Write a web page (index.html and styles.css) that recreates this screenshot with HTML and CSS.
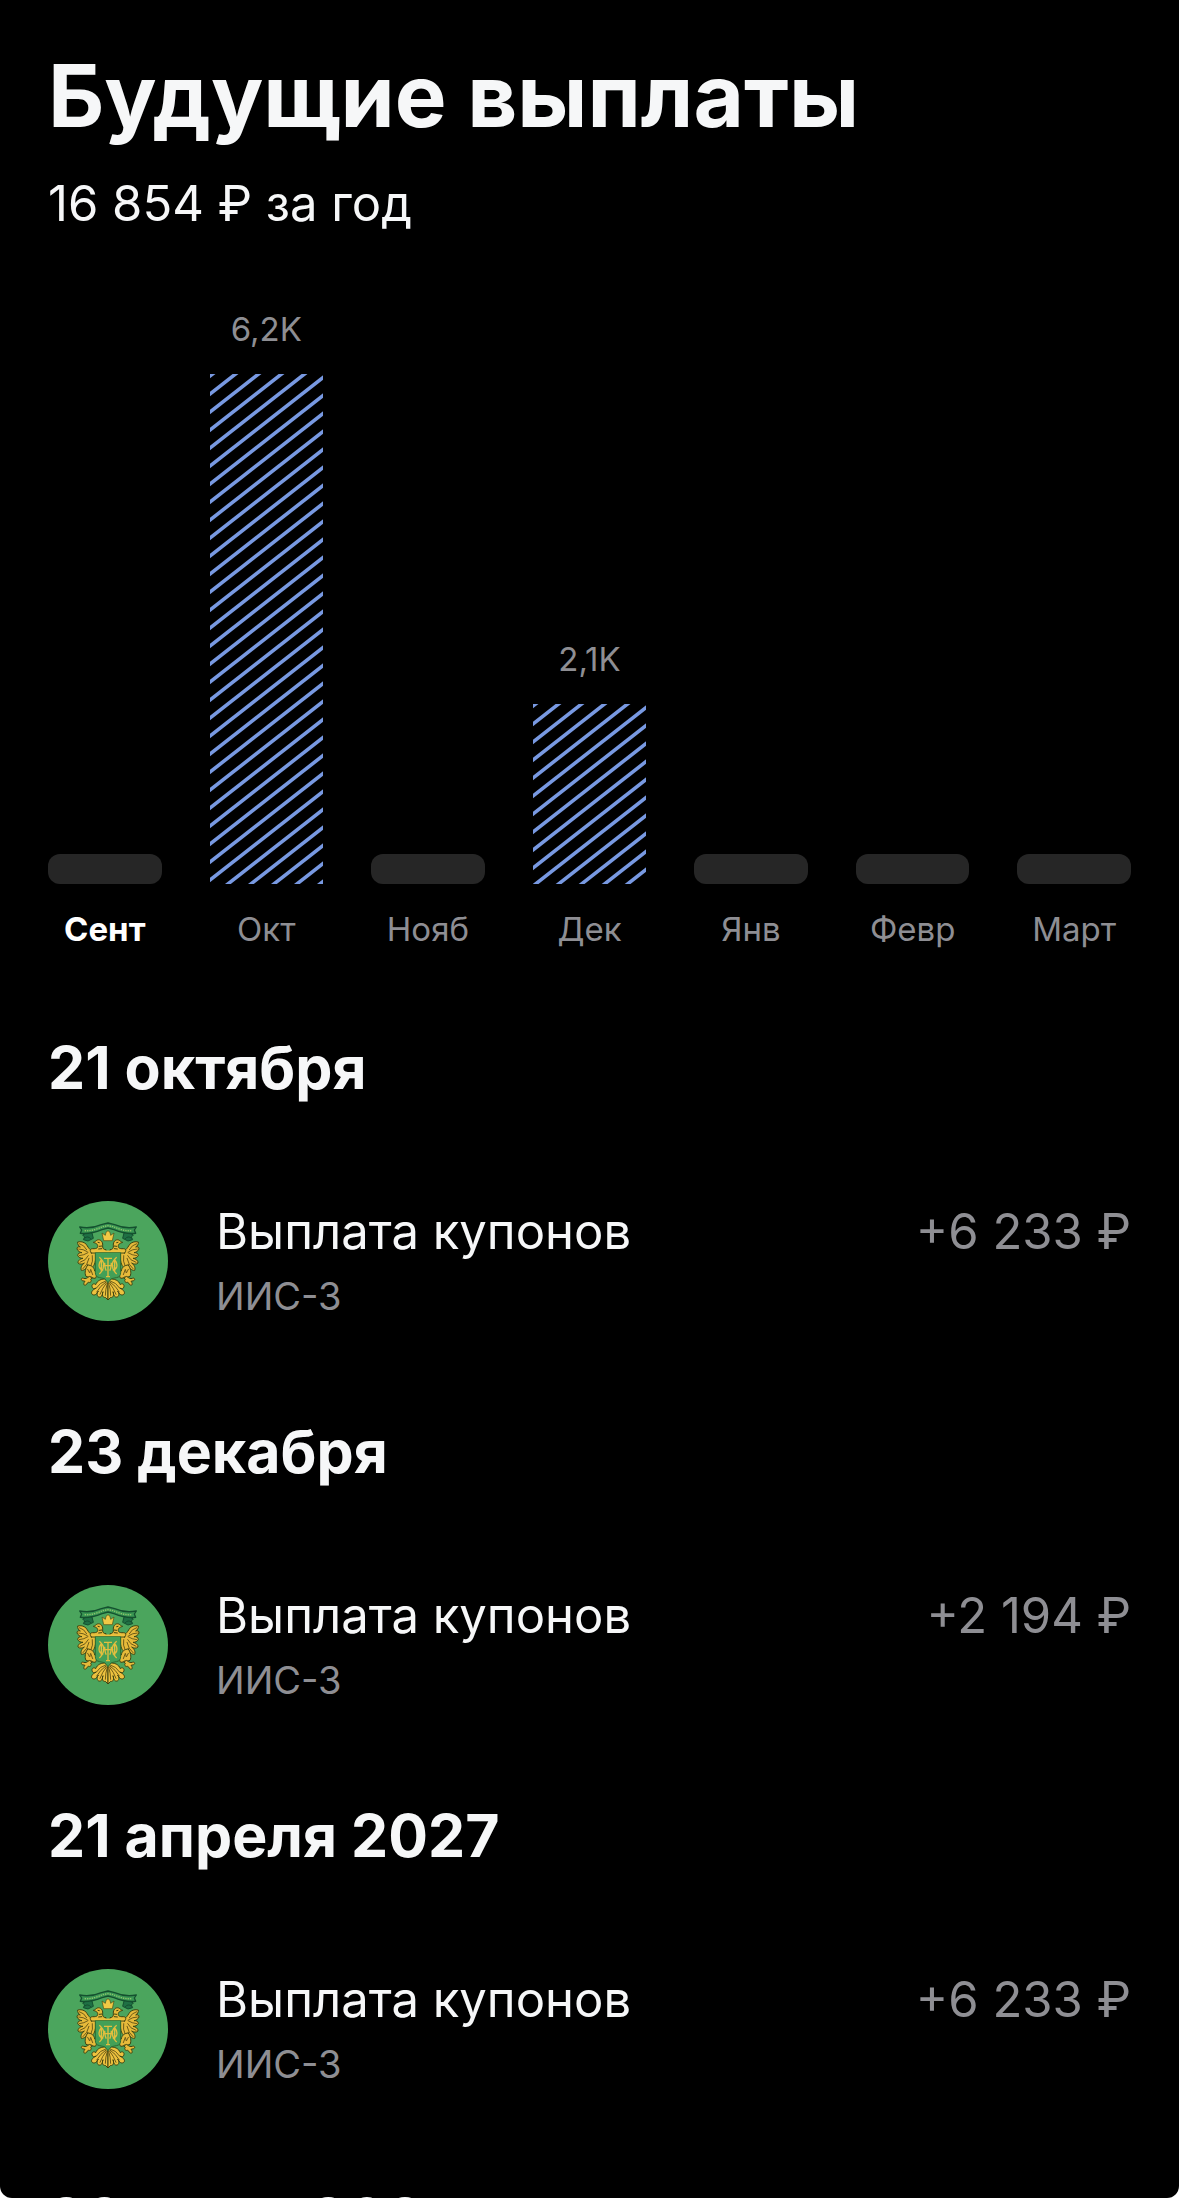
FILE: index.html
```
<!DOCTYPE html>
<html lang="ru">
<head>
    <meta charset="UTF-8">
    <meta name="viewport" content="width=device-width, initial-scale=1.0">
    <title>Будущие выплаты</title>
    <link rel="stylesheet" href="styles.css">
</head>
<body>
    <!-- shared shapes: bar hatching and issuer logo -->
    <svg class="defs" width="0" height="0" aria-hidden="true">
        <defs>
            <pattern id="hatch" width="23" height="18" patternUnits="userSpaceOnUse">
                <path d="M-23 20L23 -16M-23 38L46 -16M0 38L46 2" fill="none" stroke="#7899e2" stroke-width="3.6"/>
            </pattern>
            <g id="eagle-half" stroke="#3f4411" stroke-width="3" stroke-linejoin="round" stroke-linecap="round">
                <!-- ribbon end -->
                <path d="M148 124l-14 8 6 6-4 8 14 4 16-8-4-16z" fill="#1f7044" stroke="#14502f"/>
                <path d="M140 141q10-8 18 2" fill="none" stroke="#14502f"/>
                <!-- wing -->
                <path d="M174 182C160 184 152 172 145 160C137 152 128 151 119 153C118 160 122 165 127 168C121 166 117 168 117 174C120 181 126 184 132 185C125 184 119 188 119 193C122 200 128 202 135 202C127 203 119 209 120 216C125 221 133 220 139 216C131 222 127 230 130 238C140 239 147 230 150 222C152 230 160 232 165 227C172 218 174 204 174 182Z" fill="#e6ba3a"/>
                <path d="M124 158q15 4 22 18M122 174q14 0 26 8M124 194q14-1 26-9M126 214q18-5 25-20M135 233q14-11 18-31M159 224q7-12 4-30" fill="none" stroke="#6f5c18"/>
                <!-- neck and head -->
                <path d="M160 186L204 186L204 176C196 176 193 171 194 163C195 152 187 144 178 147C173 149 172 153 166 154C171 156 176 157 178 161C182 169 177 174 164 173C156 173 154 179 160 186Z" fill="#e6ba3a"/>
                <path d="M180 154l4 1M184 166l8-1M182 174l9-1" fill="none"/>
                <!-- leg and claw -->
                <path d="M149 222C142 232 139 246 144 256L156 260L172 262C179 252 176 243 170 240C169 230 161 222 149 222Z" fill="#e6ba3a"/>
                <path d="M149 235l6 11 3-11 6 16" fill="none" stroke="#6f5c18"/>
                <path d="M153 257C146 262 143 264 137 262C131 259 127 266 133 269L141 271C136 276 136 285 143 282C148 280 146 276 151 274C157 276 163 270 158 266L162 260Z" fill="#e6ba3a"/>
                <!-- tail feathers -->
                <path d="M205 264C190 263 178 268 173 281C169 276 161 279 162 286C162 293 169 295 175 291C163 296 156 306 164 311C173 315 178 305 181 300C174 310 178 320 187 318C194 316 193 306 195 302C191 313 195 321 202 319L210 327L210 264Z" fill="#edc23f"/>
                <path d="M203 270Q185 275 176 290M204 273Q187 284 176 303M206 275Q193 291 186 310M208 277Q202 294 202 313" fill="none" stroke="#6f5c18"/>
            </g>
            <symbol id="eagle" viewBox="30 30 360 360">
                <circle cx="210" cy="210" r="180" fill="#4ba55d"/>
                <use href="#eagle-half"/>
                <use href="#eagle-half" transform="translate(420 0) scale(-1 1)"/>
                <path d="M125 108C153 114 174 108 190 101L210 96L230 101C246 108 267 114 295 108L289 117L293 127C264 130 245 123 228 116L210 111L192 116C175 123 156 130 127 127L131 117Z" fill="#399653" stroke="#14502f" stroke-width="4" stroke-linejoin="round"/>
                <path d="M140 119C162 121 180 112 195 107L210 104L225 107C240 112 258 121 280 119" fill="none" stroke="#8dc36b" stroke-width="4" stroke-dasharray="4 3"/>
                <path d="M197 149L192 126L202 133L204 124L210 119L216 124L218 133L228 126L223 149Z" fill="#f1c945" stroke="#4c4b12" stroke-width="2"/>
                <path d="M172 184H248V245Q248 258 235 260L220 263L210 275L200 263L185 260Q172 258 172 245Z" fill="#43a057" stroke="#2d6b32" stroke-width="3"/>
                <path d="M162 181H258" stroke="#edc23f" stroke-width="5"/>
                <!-- monogram -->
                <path d="M198 202H222M210 202V257M204 257H216M184 199Q197 210 197 222Q197 237 184 249M236 199Q223 210 223 222Q223 237 236 249M190 206Q181 216 184 228Q187 237 196 237M230 206Q239 216 236 228Q233 237 224 237M190 206V241M230 206V241M200 215Q201 234 205 239M220 215Q219 234 215 239M194 224H226" fill="none" stroke="#e2be3e" stroke-width="4"/>
            </symbol>
        </defs>
    </svg>

    <main class="screen">
        <h1>Будущие выплаты</h1>
        <p class="total">16 854 ₽ за год</p>

        <ul class="chart">
            <li class="month current"><div class="bar empty"></div><span class="name">Сент</span></li>
            <li class="month">
                <span class="value">6,2K</span>
                <svg class="bar" style="height: 510px" aria-hidden="true"><rect width="100%" height="100%" fill="url(#hatch)"/></svg>
                <span class="name">Окт</span>
            </li>
            <li class="month"><div class="bar empty"></div><span class="name">Нояб</span></li>
            <li class="month">
                <span class="value">2,1K</span>
                <svg class="bar" style="height: 180px" aria-hidden="true"><rect width="100%" height="100%" fill="url(#hatch)"/></svg>
                <span class="name">Дек</span>
            </li>
            <li class="month"><div class="bar empty"></div><span class="name">Янв</span></li>
            <li class="month"><div class="bar empty"></div><span class="name">Февр</span></li>
            <li class="month"><div class="bar empty"></div><span class="name">Март</span></li>
        </ul>

        <section class="day">
            <h2>21 октября</h2>
            <div class="payment">
                <svg class="logo" aria-hidden="true"><use href="#eagle"/></svg>
                <div class="info">
                    <p class="title">Выплата купонов</p>
                    <p class="account">ИИС-3</p>
                </div>
                <p class="amount">+6 233 ₽</p>
            </div>
        </section>

        <section class="day">
            <h2>23 декабря</h2>
            <div class="payment">
                <svg class="logo" aria-hidden="true"><use href="#eagle"/></svg>
                <div class="info">
                    <p class="title">Выплата купонов</p>
                    <p class="account">ИИС-3</p>
                </div>
                <p class="amount">+2 194 ₽</p>
            </div>
        </section>

        <section class="day">
            <h2>21 апреля 2027</h2>
            <div class="payment">
                <svg class="logo" aria-hidden="true"><use href="#eagle"/></svg>
                <div class="info">
                    <p class="title">Выплата купонов</p>
                    <p class="account">ИИС-3</p>
                </div>
                <p class="amount">+6 233 ₽</p>
            </div>
        </section>

        <section class="day">
            <h2>23 июня 2027</h2>
        </section>
    </main>
</body>
</html>
```

FILE: styles.css
```
* {
    box-sizing: border-box;
    margin: 0;
    padding: 0;
}
body {
    font-family: Inter, "Liberation Sans", sans-serif;
    background-color: #fff;
    color: #f6f7f8;
}
.defs {
    position: absolute;
}
.screen {
    height: 100vh;
    padding: 48px 48px 0;
    background-color: #000;
    border-radius: 0 0 12px 12px;
    overflow-y: auto;
    scrollbar-width: none;
}
h1 {
    font-size: 87px;
    line-height: 96px;
    font-weight: 700;
}
.total {
    margin-top: 30px;
    font-size: 49px;
    line-height: 60px;
}

/* chart */
.chart {
    display: grid;
    grid-template-columns: repeat(7, 1fr);
    gap: 48px;
    align-items: end;
    margin-top: 75px;
    list-style: none;
}
.month {
    display: flex;
    flex-direction: column;
    align-items: center;
    gap: 25px;
    min-width: 0;
    font-size: 33px;
    line-height: 40px;
    color: #8e8e93;
}
.current {
    color: #fff;
    font-weight: 700;
}
.bar {
    display: block;
    width: 100%;
}
.empty {
    height: 30px;
    border-radius: 12px;
    background-color: #262626;
}

/* payments */
.day {
    margin-top: 95px;
}
.chart + .day {
    margin-top: 83px;
}
h2 {
    font-size: 59px;
    line-height: 72px;
    font-weight: 700;
}
.payment {
    display: flex;
    align-items: flex-start;
    margin-top: 97px;
}
.logo {
    flex: none;
    width: 120px;
    height: 120px;
    margin-right: 48px;
}
.info {
    flex: 1;
}
.title, .amount {
    font-size: 49px;
    line-height: 62px;
}
.account {
    margin-top: 9px;
    font-size: 38px;
    line-height: 48px;
}
.account, .amount {
    color: #8e8e93;
}
.amount {
    white-space: nowrap;
}
```
